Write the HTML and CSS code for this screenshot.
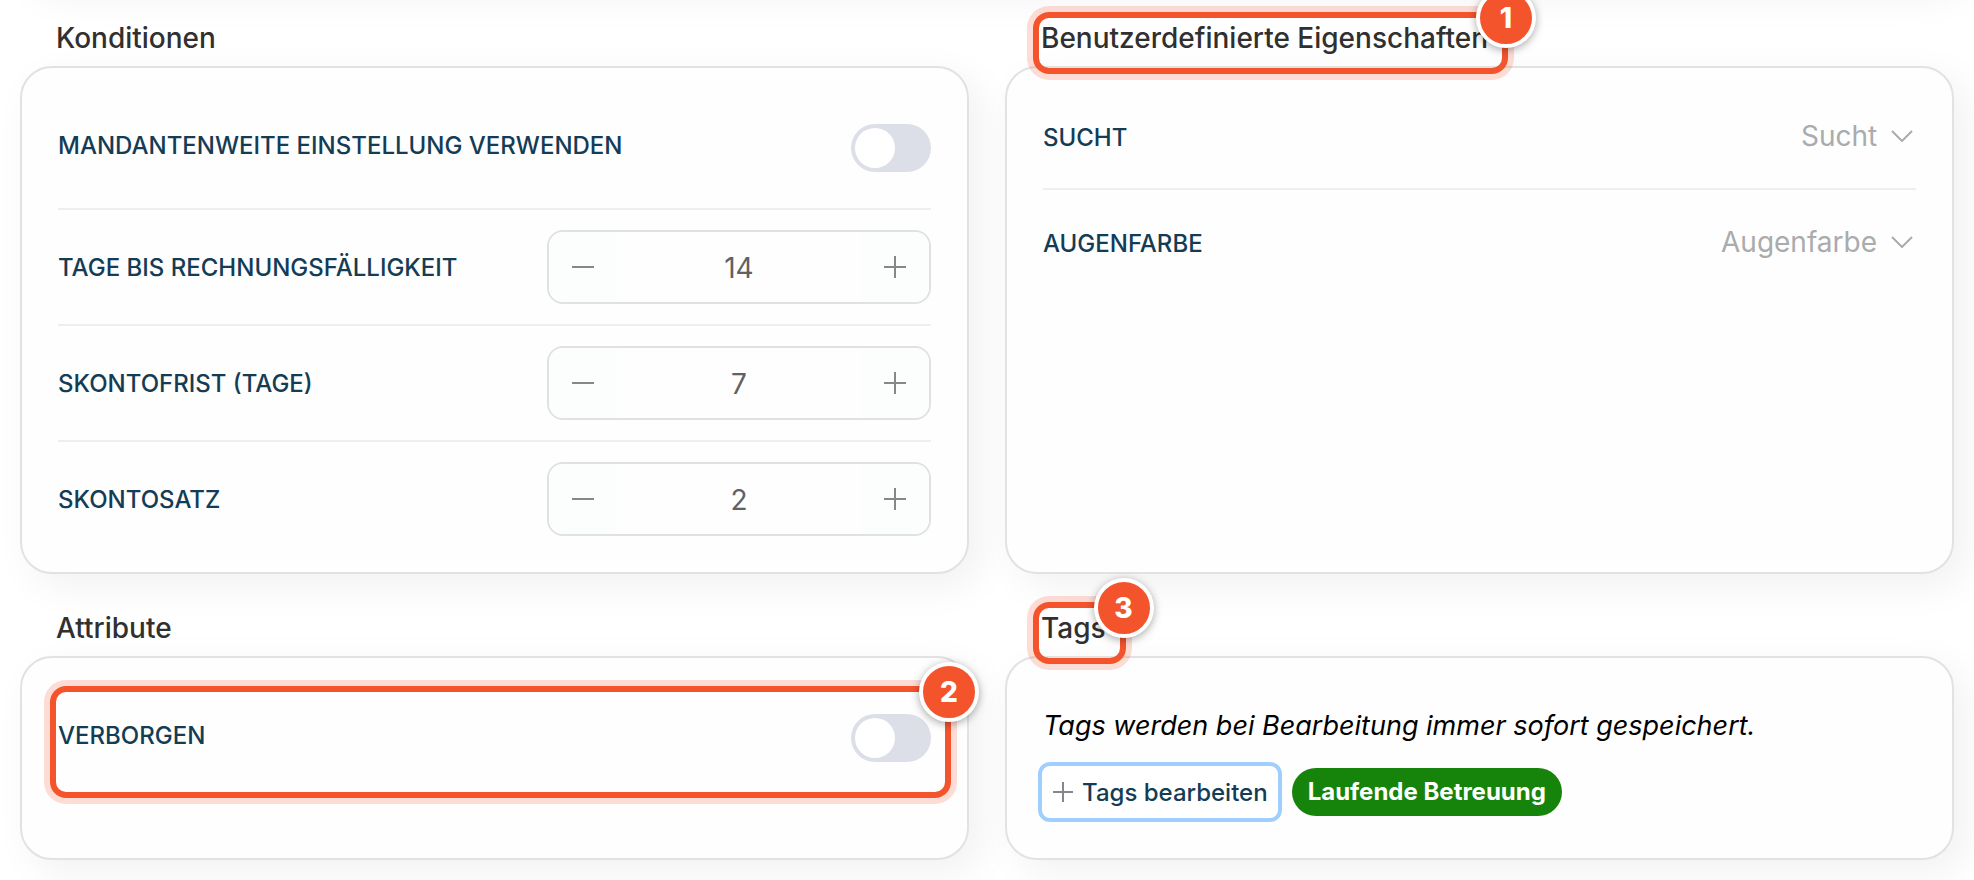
FILE: index.html
```html
<!DOCTYPE html>
<html lang="de">
<head>
<meta charset="utf-8">
<meta name="viewport" content="width=device-width, initial-scale=1">
<title>Konditionen und Eigenschaften</title>
<link rel="stylesheet" href="styles.css">
</head>
<body>
<main class="page">
  <section class="panel">
    <h2 class="panel-title"><span class="title-text">Konditionen</span></h2>
    <div class="card">
      <div class="row row-first">
        <label class="label label-switch" for="mandant">MANDANTENWEITE EINSTELLUNG VERWENDEN</label>
        <input class="switch" type="checkbox" role="switch" id="mandant">
      </div>
      <div class="row">
        <label class="label" for="faellig">TAGE BIS RECHNUNGSFÄLLIGKEIT</label>
        <div class="stepper">
          <button class="step" type="button" aria-label="Verringern"><svg class="icon" viewBox="0 0 22 22"><path d="M0 11h22"/></svg></button>
          <input class="step-value" type="text" inputmode="numeric" id="faellig" value="14">
          <button class="step" type="button" aria-label="Erhöhen"><svg class="icon" viewBox="0 0 22 22"><path d="M0 11h22M11 0v22"/></svg></button>
        </div>
      </div>
      <div class="row">
        <label class="label" for="frist">SKONTOFRIST (TAGE)</label>
        <div class="stepper">
          <button class="step" type="button" aria-label="Verringern"><svg class="icon" viewBox="0 0 22 22"><path d="M0 11h22"/></svg></button>
          <input class="step-value" type="text" inputmode="numeric" id="frist" value="7">
          <button class="step" type="button" aria-label="Erhöhen"><svg class="icon" viewBox="0 0 22 22"><path d="M0 11h22M11 0v22"/></svg></button>
        </div>
      </div>
      <div class="row row-last">
        <label class="label" for="satz">SKONTOSATZ</label>
        <div class="stepper">
          <button class="step" type="button" aria-label="Verringern"><svg class="icon" viewBox="0 0 22 22"><path d="M0 11h22"/></svg></button>
          <input class="step-value" type="text" inputmode="numeric" id="satz" value="2">
          <button class="step" type="button" aria-label="Erhöhen"><svg class="icon" viewBox="0 0 22 22"><path d="M0 11h22M11 0v22"/></svg></button>
        </div>
      </div>
    </div>
  </section>

  <section class="panel">
    <h2 class="panel-title"><span class="title-text">Benutzerdefinierte Eigenschaften<span class="marker"><span class="badge">1</span></span></span></h2>
    <div class="card">
      <div class="row row-select row-top">
        <label class="label" for="sucht">SUCHT</label>
        <div class="select-wrap">
          <select class="select" id="sucht"><option>Sucht</option></select>
          <svg class="chevron" viewBox="0 0 22 12"><path d="M1 1l10 10L21 1"/></svg>
        </div>
      </div>
      <div class="row row-select row-last">
        <label class="label" for="augen">AUGENFARBE</label>
        <div class="select-wrap">
          <select class="select" id="augen"><option>Augenfarbe</option></select>
          <svg class="chevron" viewBox="0 0 22 12"><path d="M1 1l10 10L21 1"/></svg>
        </div>
      </div>
    </div>
  </section>

  <section class="panel">
    <h2 class="panel-title"><span class="title-text">Attribute</span></h2>
    <div class="card">
      <div class="row row-last row-marked">
        <label class="label label-switch" for="verborgen">VERBORGEN</label>
        <input class="switch" type="checkbox" role="switch" id="verborgen">
        <span class="marker"><span class="badge">2</span></span>
      </div>
    </div>
  </section>

  <section class="panel">
    <h2 class="panel-title"><span class="title-text">Tags<span class="marker"><span class="badge">3</span></span></span></h2>
    <div class="card">
      <p class="hint">Tags werden bei Bearbeitung immer sofort gespeichert.</p>
      <div class="tags">
        <button class="edit-tags" type="button"><svg class="icon" viewBox="0 0 22 22"><path d="M1 11h20M11 1v20"/></svg>Tags bearbeiten</button>
        <span class="tag">Laufende Betreuung</span>
      </div>
    </div>
  </section>
</main>
</body>
</html>
```

FILE: styles.css
```css
* {
  box-sizing: border-box;
}

body {
  margin: 0;
  background: #fff;
  color: #000;
  font-family: Inter, "Liberation Sans", sans-serif;
  font-size: 28px;
}

.page {
  position: relative;
  display: grid;
  grid-template-columns: repeat(2, minmax(0, 1fr));
  column-gap: 36px;
  row-gap: 36px;
  padding: 20px;
  overflow: hidden;
}

/* lower edge of the section that is scrolled out above */
.page::before {
  content: "";
  position: absolute;
  top: -76px;
  left: 20px;
  right: 20px;
  height: 60px;
  border-radius: 32px;
  box-shadow: 12px 12px 40px rgba(0, 0, 0, 0.06);
}

.panel {
  display: flex;
  flex-direction: column;
}

.panel-title {
  position: relative;
  margin: 0 0 10px;
  padding-left: 36px;
  color: #303030;
  font-size: 28px;
  font-weight: 500;
  line-height: 36px;
}

.title-text {
  position: relative;
  display: inline-block;
}

.card {
  flex: 1;
  padding: 36px;
  border: 2px solid #e2e2e2;
  border-radius: 32px;
  background: #fefefe;
  box-shadow: 12px 12px 40px rgba(0, 0, 0, 0.06);
}

.row {
  display: flex;
  align-items: center;
  justify-content: space-between;
  gap: 20px;
  padding: 20px 0;
  border-bottom: 2px solid #eee;
}

.row-first {
  padding-bottom: 36px;
}

.row-top {
  padding-top: 0;
}

.row-last {
  padding-bottom: 0;
  border-bottom: 0;
}

.row-marked {
  position: relative;
  padding-bottom: 18px;
}

.label {
  padding-top: 2px;
  color: #143c55;
  font-size: 24px;
  font-weight: 500;
  line-height: 32px;
}

.label-switch {
  padding: 0 0 4px;
}

.switch {
  appearance: none;
  flex: none;
  width: 80px;
  height: 48px;
  margin: 0;
  padding: 4px;
  border-radius: 24px;
  background: #dcdfe8;
}

.switch::before {
  content: "";
  display: block;
  width: 40px;
  height: 40px;
  border-radius: 50%;
  background: #fff;
}

.switch:checked::before {
  margin-left: auto;
}

.stepper {
  display: flex;
  flex: 0 0 44%;
  height: 74px;
  border: 2px solid #e0e1e2;
  border-radius: 16px;
  overflow: hidden;
}

.step {
  display: flex;
  flex: 0 0 68px;
  align-items: center;
  justify-content: center;
  padding: 0;
  border: 0;
  background: #fcfefe;
}

.step-value {
  flex: 1;
  min-width: 0;
  padding: 2px 0 0;
  border: 0;
  background: transparent;
  color: #606163;
  font: inherit;
  text-align: center;
}

.icon {
  width: 22px;
  height: 22px;
  fill: none;
  stroke: #85878a;
  stroke-width: 2;
}

.select-wrap {
  position: relative;
}

.select {
  appearance: none;
  display: block;
  height: 64px;
  padding: 0 38px 0 0;
  border: 0;
  background: transparent;
  color: #a9abad;
  font: inherit;
}

.row-select .label {
  padding-top: 4px;
}

.chevron {
  position: absolute;
  top: 26px;
  right: 3px;
  width: 22px;
  height: 12px;
  fill: none;
  stroke: #a9abad;
  stroke-width: 2;
  pointer-events: none;
}

.hint {
  margin: 0 0 4px;
  font-size: 27px;
  font-style: italic;
  line-height: 64px;
}

.tags {
  display: flex;
  align-items: center;
  gap: 10px;
  margin-left: -5px;
}

.edit-tags {
  display: flex;
  align-items: center;
  gap: 8px;
  height: 60px;
  padding: 0 10px;
  border: 4px solid #a1cffd;
  border-radius: 12px;
  background: #fff;
  color: #143c55;
  font: inherit;
  font-size: 24px;
  font-weight: 500;
}

.tag {
  padding: 0 16px;
  border-radius: 24px;
  background: #16830b;
  color: #fff;
  font-size: 24px;
  font-weight: 700;
  line-height: 48px;
}

/* numbered call-out frame laid over an element */
.marker {
  position: absolute;
  inset: -8px -20px -18px -8px;
  border: 6px solid #f3542c;
  border-radius: 16px;
  box-shadow: 0 0 0 6px rgba(243, 84, 44, 0.2);
  pointer-events: none;
}

.badge {
  position: absolute;
  top: -30px;
  right: -34px;
  width: 60px;
  height: 60px;
  border: 4px solid #fff;
  border-radius: 50%;
  background: #f3542c;
  box-shadow: 0 2px 8px rgba(0, 0, 0, 0.35);
  color: #fff;
  font-size: 28px;
  font-weight: 800;
  line-height: 52px;
  text-align: center;
}
```
